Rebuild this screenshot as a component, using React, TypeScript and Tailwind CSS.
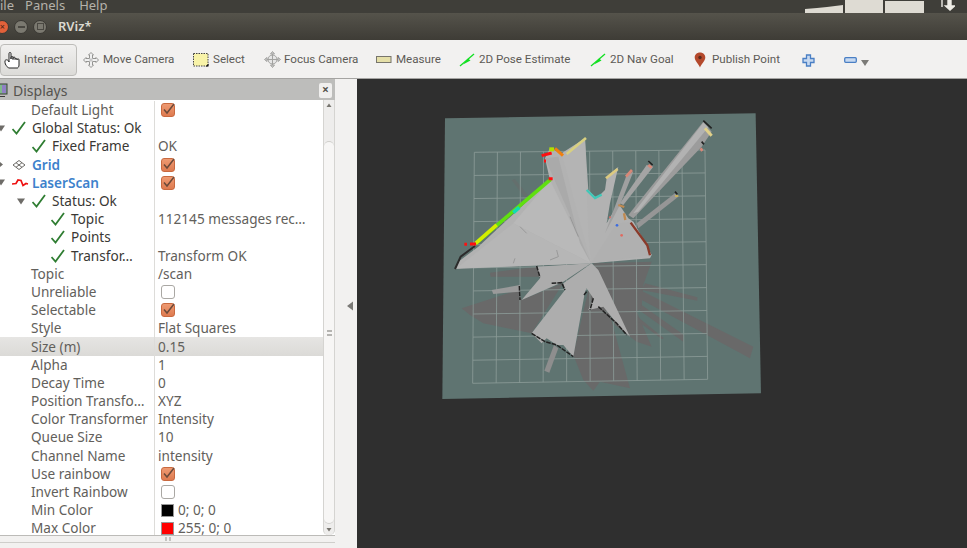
import { FC, ReactNode } from "react";

const FONT = "font-['Noto_Sans',sans-serif]";

const Arrow: FC<{ open?: boolean }> = ({ open }) => (
  <span className="w-[15px] shrink-0 flex items-center">
    <svg width="9" height="9" viewBox="0 0 9 9">
      {open ? <path d="M0 1.5h8L4 7.5z" fill="#6e6c68" /> : <path d="M1 0.5v8l5-4z" fill="#6e6c68" />}
    </svg>
  </span>
);

const Check: FC = () => (
  <svg width="20" height="14" viewBox="0 0 20 14" className="shrink-0">
    <path d="M0.5 8l4 4.5L13 1" fill="none" stroke="#2f7d32" strokeWidth="1.8" />
  </svg>
);

const GridIcon: FC = () => (
  <svg width="20" height="12" viewBox="0 0 20 12" className="shrink-0">
    <path d="M1 6l6-4.500L13 6l-6 4.500zM4 3.700l6 4.600M10 3.700L4 8.300" fill="none" stroke="#6a6864" strokeWidth="1" />
  </svg>
);

const LaserIcon: FC = () => (
  <svg width="20" height="12" viewBox="0 0 20 12" className="shrink-0">
    <path d="M0 7l4-.5 2-3.500 3 .5 2 5 3-2 2 .5" fill="none" stroke="#ee1111" strokeWidth="1.7" />
  </svg>
);

const CheckBox: FC<{ on?: boolean }> = ({ on }) =>
  on ? (
    <span className="ml-[3px] w-[14px] h-[14px] rounded-[3px] bg-gradient-to-b from-[#ee9a72] to-[#de7b50] border border-[#c9693f] flex items-center justify-center">
      <svg width="14" height="14" viewBox="0 0 14 14" className="overflow-visible">
        <path d="M3 6.500l3 3.500L13 1" fill="none" stroke="#6b4a3a" strokeWidth="1.5" />
      </svg>
    </span>
  ) : (
    <span className="ml-[3px] w-[14px] h-[14px] rounded-[3px] bg-white border border-[#aaa8a4]" />
  );

type Row = {
  label: string;
  pad: string;
  value?: string;
  on?: boolean;
  off?: boolean;
  arrow?: "open" | "closed" | "none";
  icon?: "check" | "grid" | "laser";
  tone?: "dark" | "blue";
  swatch?: string;
  hi?: boolean;
};

const rows: Row[] = [
  { label: "Default Light", pad: "pl-[31px]", on: true },
  { label: "Global Status: Ok", pad: "-ml-[3px]", arrow: "open", icon: "check", tone: "dark" },
  { label: "Fixed Frame", pad: "pl-[17px]", arrow: "none", icon: "check", tone: "dark", value: "OK" },
  { label: "Grid", pad: "-ml-[3px]", arrow: "closed", icon: "grid", tone: "blue", on: true },
  { label: "LaserScan", pad: "-ml-[3px]", arrow: "open", icon: "laser", tone: "blue", on: true },
  { label: "Status: Ok", pad: "pl-[17px]", arrow: "open", icon: "check", tone: "dark" },
  { label: "Topic", pad: "pl-[36px]", arrow: "none", icon: "check", tone: "dark", value: "112145 messages rec…" },
  { label: "Points", pad: "pl-[36px]", arrow: "none", icon: "check", tone: "dark" },
  { label: "Transfor…", pad: "pl-[36px]", arrow: "none", icon: "check", tone: "dark", value: "Transform OK" },
  { label: "Topic", pad: "pl-[31px]", value: "/scan" },
  { label: "Unreliable", pad: "pl-[31px]", off: true },
  { label: "Selectable", pad: "pl-[31px]", on: true },
  { label: "Style", pad: "pl-[31px]", value: "Flat Squares" },
  { label: "Size (m)", pad: "pl-[31px]", value: "0.15", hi: true },
  { label: "Alpha", pad: "pl-[31px]", value: "1" },
  { label: "Decay Time", pad: "pl-[31px]", value: "0" },
  { label: "Position Transfo…", pad: "pl-[31px]", value: "XYZ" },
  { label: "Color Transformer", pad: "pl-[31px]", value: "Intensity" },
  { label: "Queue Size", pad: "pl-[31px]", value: "10" },
  { label: "Channel Name", pad: "pl-[31px]", value: "intensity" },
  { label: "Use rainbow", pad: "pl-[31px]", on: true },
  { label: "Invert Rainbow", pad: "pl-[31px]", off: true },
  { label: "Min Color", pad: "pl-[31px]", value: "0; 0; 0", swatch: "bg-black" },
  { label: "Max Color", pad: "pl-[31px]", value: "255; 0; 0", swatch: "bg-[#ff0000]" },
];

const TreeRow: FC<{ row: Row }> = ({ row }) => {
  const labelTone =
    row.tone === "blue"
      ? "text-[#3d82cc] font-semibold"
      : row.tone === "dark"
        ? "text-[#3a3834]"
        : "text-[#62605b]";
  return (
    <div className={`grid grid-cols-[155px_1fr] h-[18.2px] shrink-0 text-[13.6px] leading-[18px] ${row.hi ? "bg-gradient-to-b from-[#e6e5e3] to-[#dbdad7]" : ""}`}>
      <div className={`flex items-center whitespace-nowrap border-r border-[#dddcd9] ${row.pad}`}>
        {row.arrow === "open" && <Arrow open />}
        {row.arrow === "closed" && <Arrow />}
        {row.arrow === "none" && <span className="w-[15px] shrink-0" />}
        {row.icon === "check" && <Check />}
        {row.icon === "grid" && <GridIcon />}
        {row.icon === "laser" && <LaserIcon />}
        <span className={labelTone}>{row.label}</span>
      </div>
      <div className="flex items-center pl-[3px] whitespace-nowrap text-[#62605b]">
        {row.on && <CheckBox on />}
        {row.off && <CheckBox />}
        {row.swatch && <span className={`ml-[3px] mr-[4px] w-[13px] h-[13px] border border-[#999] ${row.swatch}`} />}
        {row.value && <span>{row.value}</span>}
      </div>
    </div>
  );
};

const ToolItem: FC<{ width: string; icon: ReactNode; label: string }> = ({ width, icon, label }) => (
  <div className={`flex items-center shrink-0 ${width}`}>
    <span className="w-[20px] shrink-0 flex items-center">{icon}</span>
    <span className="font-['Roboto',sans-serif] text-[11.6px] text-[#5d5b57] whitespace-nowrap">{label}</span>
  </div>
);

const GoalArrow: FC = () => (
  <svg width="16" height="14" viewBox="0 0 16 14">
    <path d="M1 13L15 1" stroke="#10e020" strokeWidth="1.3" />
    <path d="M4 11.500L9 5.500l2.500 2z" fill="#10e020" />
  </svg>
);

const Toolbar: FC = () => (
  <div className="h-[39px] shrink-0 bg-[#f2f1f0] border-b border-[#a5a4a2] flex items-center pt-[2px]">
    <button className="w-[77px] h-[32px] mr-[6px] shrink-0 rounded-[4px] border border-[#bdbcb9] bg-gradient-to-b from-[#f1f0ef] to-[#dcdbd8] flex items-center pl-[3px]">
      <svg width="17" height="18" viewBox="0 0 17 18" fill="#fff" stroke="#222" strokeWidth="1">
        <path d="M5 11V2.500a1 1 0 0 1 2 0V8V6.500a1 1 0 0 1 2 0V8.500V7a1 1 0 0 1 2 0v1.500a1 1 0 0 1 2 0V9v-.2a1 1 0 0 1 2 0V14c0 1.500-.7 2.500-1.500 3H4.500C3 15.500 1 13.500 1 11.500V10c0-1 1-1.200 1.500-1.200S5 9.500 5 11z" />
      </svg>
      <span className="ml-[3px] font-['Roboto',sans-serif] text-[11.6px] text-[#5d5b57] whitespace-nowrap">Interact</span>
    </button>
    <ToolItem
      width="w-[110px]"
      label="Move Camera"
      icon={
        <svg width="16" height="16" viewBox="0 0 16 16" fill="#f0f0f0" stroke="#8a8a88" strokeWidth="0.9">
          <path d="M8 0.500L10.500 3H9.500V6.500H13V5.500L15.500 8 13 10.500V9.500H9.500V13H10.500L8 15.500 5.500 13H6.500V9.500H3V10.500L0.500 8 3 5.500V6.500H6.500V3H5.500z" />
          <path d="M6.500 6.500h3v3h-3z" fill="#c8c8c8" stroke="none" />
        </svg>
      }
    />
    <ToolItem
      width="w-[71px]"
      label="Select"
      icon={
        <svg width="16" height="14" viewBox="0 0 16 14">
          <rect x="0.500" y="0.500" width="14.500" height="12.500" fill="#f8f3a8" stroke="#444" strokeWidth="1" strokeDasharray="1.500 1" />
          <path d="M12.500 13.500h3V10.500z" fill="#111" />
        </svg>
      }
    />
    <ToolItem
      width="w-[112px]"
      label="Focus Camera"
      icon={
        <svg width="17" height="17" viewBox="0 0 17 17" fill="none" stroke="#a2a2a0" strokeWidth="1">
          <path d="M8.500 0.500l2 2.500h-4zM8.500 16.500l2-2.500h-4zM0.500 8.500l2.500-2v4zM16.500 8.500l-2.500-2v4z" fill="#cfcfcf" />
          <circle cx="8.500" cy="8.500" r="4.500" fill="#e5e5e5" />
          <path d="M8.500 3v11M3 8.500h11" />
        </svg>
      }
    />
    <ToolItem
      width="w-[83px]"
      label="Measure"
      icon={
        <svg width="16" height="8" viewBox="0 0 16 8">
          <rect x="0.500" y="0.500" width="14.500" height="6" fill="#e5dfa8" stroke="#77756c" strokeWidth="1" />
        </svg>
      }
    />
    <ToolItem width="w-[131px]" label="2D Pose Estimate" icon={<GoalArrow />} />
    <ToolItem width="w-[104px]" label="2D Nav Goal" icon={<GoalArrow />} />
    <div className="flex items-center shrink-0 w-[108px]">
      <span className="w-[18px] shrink-0 flex items-center">
        <svg width="12" height="16" viewBox="0 0 12 16">
          <path d="M6 0.500C2.800 0.500 0.700 2.700 0.700 5.500 0.700 9 4.800 12 6 15.500 7.200 12 11.300 9 11.300 5.500 11.300 2.700 9.200 0.500 6 0.500z" fill="#b4492c" />
          <circle cx="6" cy="5.500" r="1.700" fill="#5a2a1c" />
        </svg>
      </span>
      <span className="font-['Roboto',sans-serif] text-[11.6px] text-[#5d5b57] whitespace-nowrap">Publish Point</span>
    </div>
    <div className="w-[42px] shrink-0">
      <svg width="13" height="13" viewBox="0 0 13 13">
        <path d="M4.500 1h4v3.500H12v4H8.500V12h-4V8.500H1v-4h3.500z" fill="#c7d9f0" stroke="#4a7fc4" strokeWidth="1.300" />
      </svg>
    </div>
    <div className="w-[17px] shrink-0 flex items-center">
      <svg width="13" height="6" viewBox="0 0 13 6">
        <rect x="0.700" y="0.700" width="11.600" height="4.600" rx="1" fill="#c7d9f0" stroke="#4a7fc4" strokeWidth="1.300" />
      </svg>
    </div>
    <svg width="8" height="6" viewBox="0 0 8 6" className="mt-[5px]">
      <path d="M0 0h8L4 6z" fill="#7b7a77" />
    </svg>
  </div>
);

const TopBars: FC = () => (
  <>
    <div className="h-[13px] shrink-0 bg-[#3f3e39] relative overflow-hidden flex items-end text-[13px] leading-[18px] text-[#b5b2aa]">
      <span className="-mb-[1px] whitespace-nowrap">ile</span>
      <span className="ml-[11px] -mb-[1px] whitespace-nowrap">Panels</span>
      <span className="ml-[14px] -mb-[1px] whitespace-nowrap">Help</span>
      <div className="ml-auto mr-[12px] flex items-end gap-[2px] h-[13px]">
        <svg width="38" height="13" viewBox="0 0 38 13">
          <path d="M0 9l12-1 10-1 16-2v8H0z" fill="#dedbd3" />
        </svg>
        <div className="w-[38px] h-[13px] bg-[#dedbd3]" />
        <div className="w-[39px] h-[12px] bg-[#dedbd3] mr-[13px]" />
        <svg width="16" height="11" viewBox="0 0 16 11" className="mb-[2px]">
          <path d="M3 0v7M9 0v6h-2.500l4.500 4 4.500-4H12V0" fill="#eeece6" stroke="#eeece6" strokeWidth="1.400" />
        </svg>
      </div>
    </div>
    <div className="h-[27px] shrink-0 bg-gradient-to-b from-[#55534b] to-[#3e3c36] flex items-center">
      <span className="-ml-[5px] w-[14px] h-[14px] rounded-full bg-[#e2613a] border border-[#3a3833] flex items-center justify-end pr-[3px] text-[9px] leading-none text-[#4a2315]">×</span>
      <span className="ml-[5px] w-[14px] h-[14px] rounded-full bg-[#7b7970] border border-[#3a3833] flex items-center justify-center">
        <span className="w-[7px] h-[2px] bg-[#4a4842]" />
      </span>
      <span className="ml-[5px] w-[14px] h-[14px] rounded-full bg-[#7b7970] border border-[#3a3833] flex items-center justify-center">
        <span className="w-[7px] h-[7px] border border-[#4a4842]" />
      </span>
      <span className="ml-[11px] text-[13px] font-semibold text-[#dcd9d0]">RViz*</span>
    </div>
  </>
);

const DisplaysPanel: FC = () => (
  <div className="w-[335px] shrink-0 flex flex-col overflow-hidden bg-[#f2f1f0]">
    <div className="h-[21px] shrink-0 bg-[#bdbdbb] flex items-center pt-[1px]">
      <svg width="9" height="15" viewBox="0 0 9 15" className="-ml-[1px] mr-[5px]">
        <rect x="-3" y="1" width="11" height="10" fill="#7fb98a" stroke="#3a3a3a" strokeWidth="1" />
        <path d="M-1 13h7v1h-7z" fill="#3a3a3a" />
        <rect x="3" y="2" width="4" height="8" fill="#8f7fc4" />
      </svg>
      <span className="text-[14px] text-[#55534f]">Displays</span>
      <span className="ml-auto mr-[3px] w-[13px] h-[15px] rounded-[2px] bg-[#f0efee] flex items-center justify-center text-[12px] leading-none font-bold text-[#55534f]">×</span>
    </div>
    <div className="h-[436px] shrink-0 flex bg-white border-b border-[#bcbbb8]">
      <div className="w-[323px] shrink-0 flex flex-col overflow-hidden pt-[1px]">
        {rows.map((row, i) => (
          <TreeRow key={i} row={row} />
        ))}
      </div>
      <div className="w-[12px] shrink-0 flex flex-col items-center bg-[#eeedec] border-x border-[#d5d4d1] rounded-b-[5px]">
        <svg width="8" height="11" viewBox="0 0 8 11" className="shrink-0">
          <path d="M1.500 7h5L4 3.500z" fill="#77756f" />
        </svg>
        <div className="h-[30px] shrink-0" />
        <div className="flex-1 w-full bg-[#f7f6f5] border-y border-[#cfcecb] rounded-[5px] flex items-center justify-center mb-[11px]">
          <span className="w-[5px] h-[6px] border-y-2 border-double border-[#b5b4b1]" />
        </div>
        <svg width="8" height="10" viewBox="0 0 8 10" className="shrink-0 -mt-[10px]">
          <path d="M1.500 3h5L4 6.500z" fill="#77756f" />
        </svg>
      </div>
    </div>
    <div className="h-[6px] shrink-0 flex justify-center items-center">
      <span className="w-[6px] h-[4px] border-x-2 border-double border-[#c4c3c0]" />
    </div>
    <div className="flex-1 border-t border-[#cfcecb]" />
  </div>
);

const gridLines = () => {
  const tl = [133, 157], tr = [825, 150], br = [833, 838], bl = [128, 850];
  const lerp = (a: number[], b: number[], t: number) => [a[0] + (b[0] - a[0]) * t, a[1] + (b[1] - a[1]) * t];
  const out: string[] = [];
  for (let i = 0; i <= 10; i++) {
    const t = i / 10;
    const a = lerp(tl, tr, t), b = lerp(bl, br, t), c = lerp(tl, bl, t), d = lerp(tr, br, t);
    out.push(`M${a[0]} ${a[1]}L${b[0]} ${b[1]}M${c[0]} ${c[1]}L${d[0]} ${d[1]}`);
  }
  return out.join("");
};

// drawn in the coordinates of the 3x crop, hence the scale below
const MapView: FC = () => (
  <svg viewBox="0 0 610 469" className="w-full h-full block blur-[0.5px]">
    <g transform="translate(73 21) scale(0.3333)">
      <path d="M45 55L977 40 993 880 37 897z" fill="#5f7471" />
      {/* unlit part, south side */}
      <g fill="#696969">
        <path d="M95 625L265 570 275 600 400 548 305 700 160 670 120 645z" />
        <path d="M180 518L322 500 330 530 182 530z" />
        <path d="M475 570L430 765 460 840 490 872 510 845 600 865 555 700 505 510z" />
        <path d="M490 490L665 485 640 555 635 625 620 635 665 740 620 725 555 675z" />
        <path d="M645 550L802 592 802 602 635 570z" />
        <path d="M630 570L970 740 960 775 630 597z" />
        <path d="M635 615L762 705 760 725 630 632z" />
        <path d="M610 640L702 715 695 717 605 650z" />
        <path d="M245 240L255 238 335 335 322 345z" opacity="0.5" />
      </g>
      <path d={gridLines()} stroke="#8c9b98" strokeWidth="2.500" fill="none" />
      {/* lit fans */}
      <path
        d="M483 490L75 507 85 485 145 440 360 240 345 175 360 145 405 165 465 115 475 270 500 295 525 270 530 235 565 200 540 310 530 370 565 310 595 355 610 365 665 465 660 475z"
        fill="#b2b2b2"
      />
      <path d="M483 490L320 500 330 535 275 600 400 545z" fill="#acacac" />
      <path
        d="M485 490L400 550 405 570 305 700 335 730 350 715 380 735 400 735 430 770 465 575 470 565 490 595 475 630 520 620 560 670 580 690 600 710 505 510z"
        fill="#adadad"
      />
      <path d="M483 490L250 370 360 240z" fill="#b9b9b9" />
      <path d="M483 490L80 505 250 370z" fill="#b6b6b6" />
      <path d="M483 490L345 175 385 170 450 430z" fill="#aaaaaa" />
      <path d="M483 490L395 160 465 115 475 400z" fill="#b4b4b4" />
      <path d="M483 490L560 370 610 365 665 465z" fill="#b0b0b0" />
      {/* long beams */}
      <path d="M590 225L610 215 570 315 525 400z" fill="#a0a0a0" />
      <path d="M650 195L670 200 580 315 570 310z" fill="#a4a4a4" />
      <path d="M595 345L820 65 845 95 815 140 610 355z" fill="#9c9c9c" />
      <path d="M610 340L820 68 835 82 625 335z" fill="#b2b2b2" />
      <path d="M620 370L735 280 745 290 625 385z" fill="#969696" />
      <path d="M185 570L270 555 270 575 190 582z" fill="#9a9a9a" />
      <path d="M372 735L385 745 358 818 343 812z" fill="#8e8e8e" />
      {/* walls */}
      <path d="M75 507L92 470 135 438" stroke="#2b2b2b" strokeWidth="6" fill="none" />
      <path d="M320 498L330 532M268 558L270 600M365 550L395 548 405 570M305 700L345 725 380 735 430 770M470 575L462 585M490 595L480 630M505 620L560 670 590 705" stroke="#222" strokeWidth="4.500" strokeDasharray="14 3" fill="none" />
      <path d="M820 62L845 85M655 183L668 195M735 275L742 283M815 125L822 133" stroke="#222" strokeWidth="5" fill="none" />
      <path d="M380 450L385 470 360 480M250 490L255 475M420 350L445 410M270 380L290 400" stroke="#8a8a8a" strokeWidth="2" fill="none" />
      {/* laser hits */}
      <path d="M137 430L362 238" stroke="#60e010" strokeWidth="11" fill="none" />
      <path d="M137 430L200 375" stroke="#d4ee00" strokeWidth="11" fill="none" />
      <path d="M250 338L268 322" stroke="#10dcb0" strokeWidth="11" fill="none" />
      <path d="M103 433h8M120 432h18M335 167l30-8M342 183h6M356 236h12" stroke="#ff1010" strokeWidth="9" fill="none" />
      <path d="M358 148h14" stroke="#b0e000" strokeWidth="12" fill="none" />
      <path d="M375 145l24 22" stroke="#f08010" strokeWidth="9" fill="none" />
      <path d="M410 162l58-48" stroke="#d8d080" strokeWidth="8" fill="none" />
      <path d="M470 270l25 24 20-10" stroke="#40c8b8" strokeWidth="7" fill="none" />
      <path d="M528 235l35-28" stroke="#dcca80" strokeWidth="8" fill="none" />
      <path d="M588 230l18-20M655 195l10 8M812 145l5 8" stroke="#d88878" strokeWidth="8" fill="none" />
      <path d="M825 85l20 22" stroke="#e0d088" strokeWidth="9" fill="none" />
      <path d="M735 288h10" stroke="#c8b060" strokeWidth="6" fill="none" />
      <path d="M602 368l50 68 8 30" stroke="#8a3a2a" strokeWidth="7" fill="none" />
      <path d="M565 315l18 6M582 340l4 20" stroke="#c08a50" strokeWidth="7" fill="none" />
      <circle cx="561" cy="376" r="4" fill="#3c6ce0" />
      <circle cx="575" cy="406" r="4" fill="#e06a60" />
      <circle cx="540" cy="352" r="3" fill="#e06a60" />
    </g>
  </svg>
);

const App: FC = () => (
  <div className={`w-[967px] h-[548px] overflow-hidden flex flex-col bg-[#f2f1f0] ${FONT}`}>
    <TopBars />
    <Toolbar />
    <div className="flex-1 flex min-h-0">
      <DisplaysPanel />
      <div className="w-[22px] shrink-0 flex items-center justify-end pr-[4px] pb-[16px] bg-[#f2f1f0]">
        <svg width="6" height="10" viewBox="0 0 6 10">
          <path d="M6 0.500v9L0 5z" fill="#7b7a77" />
        </svg>
      </div>
      <div className="flex-1 min-w-0 bg-[#2f2f2f]">
        <MapView />
      </div>
    </div>
  </div>
);

export default App;
